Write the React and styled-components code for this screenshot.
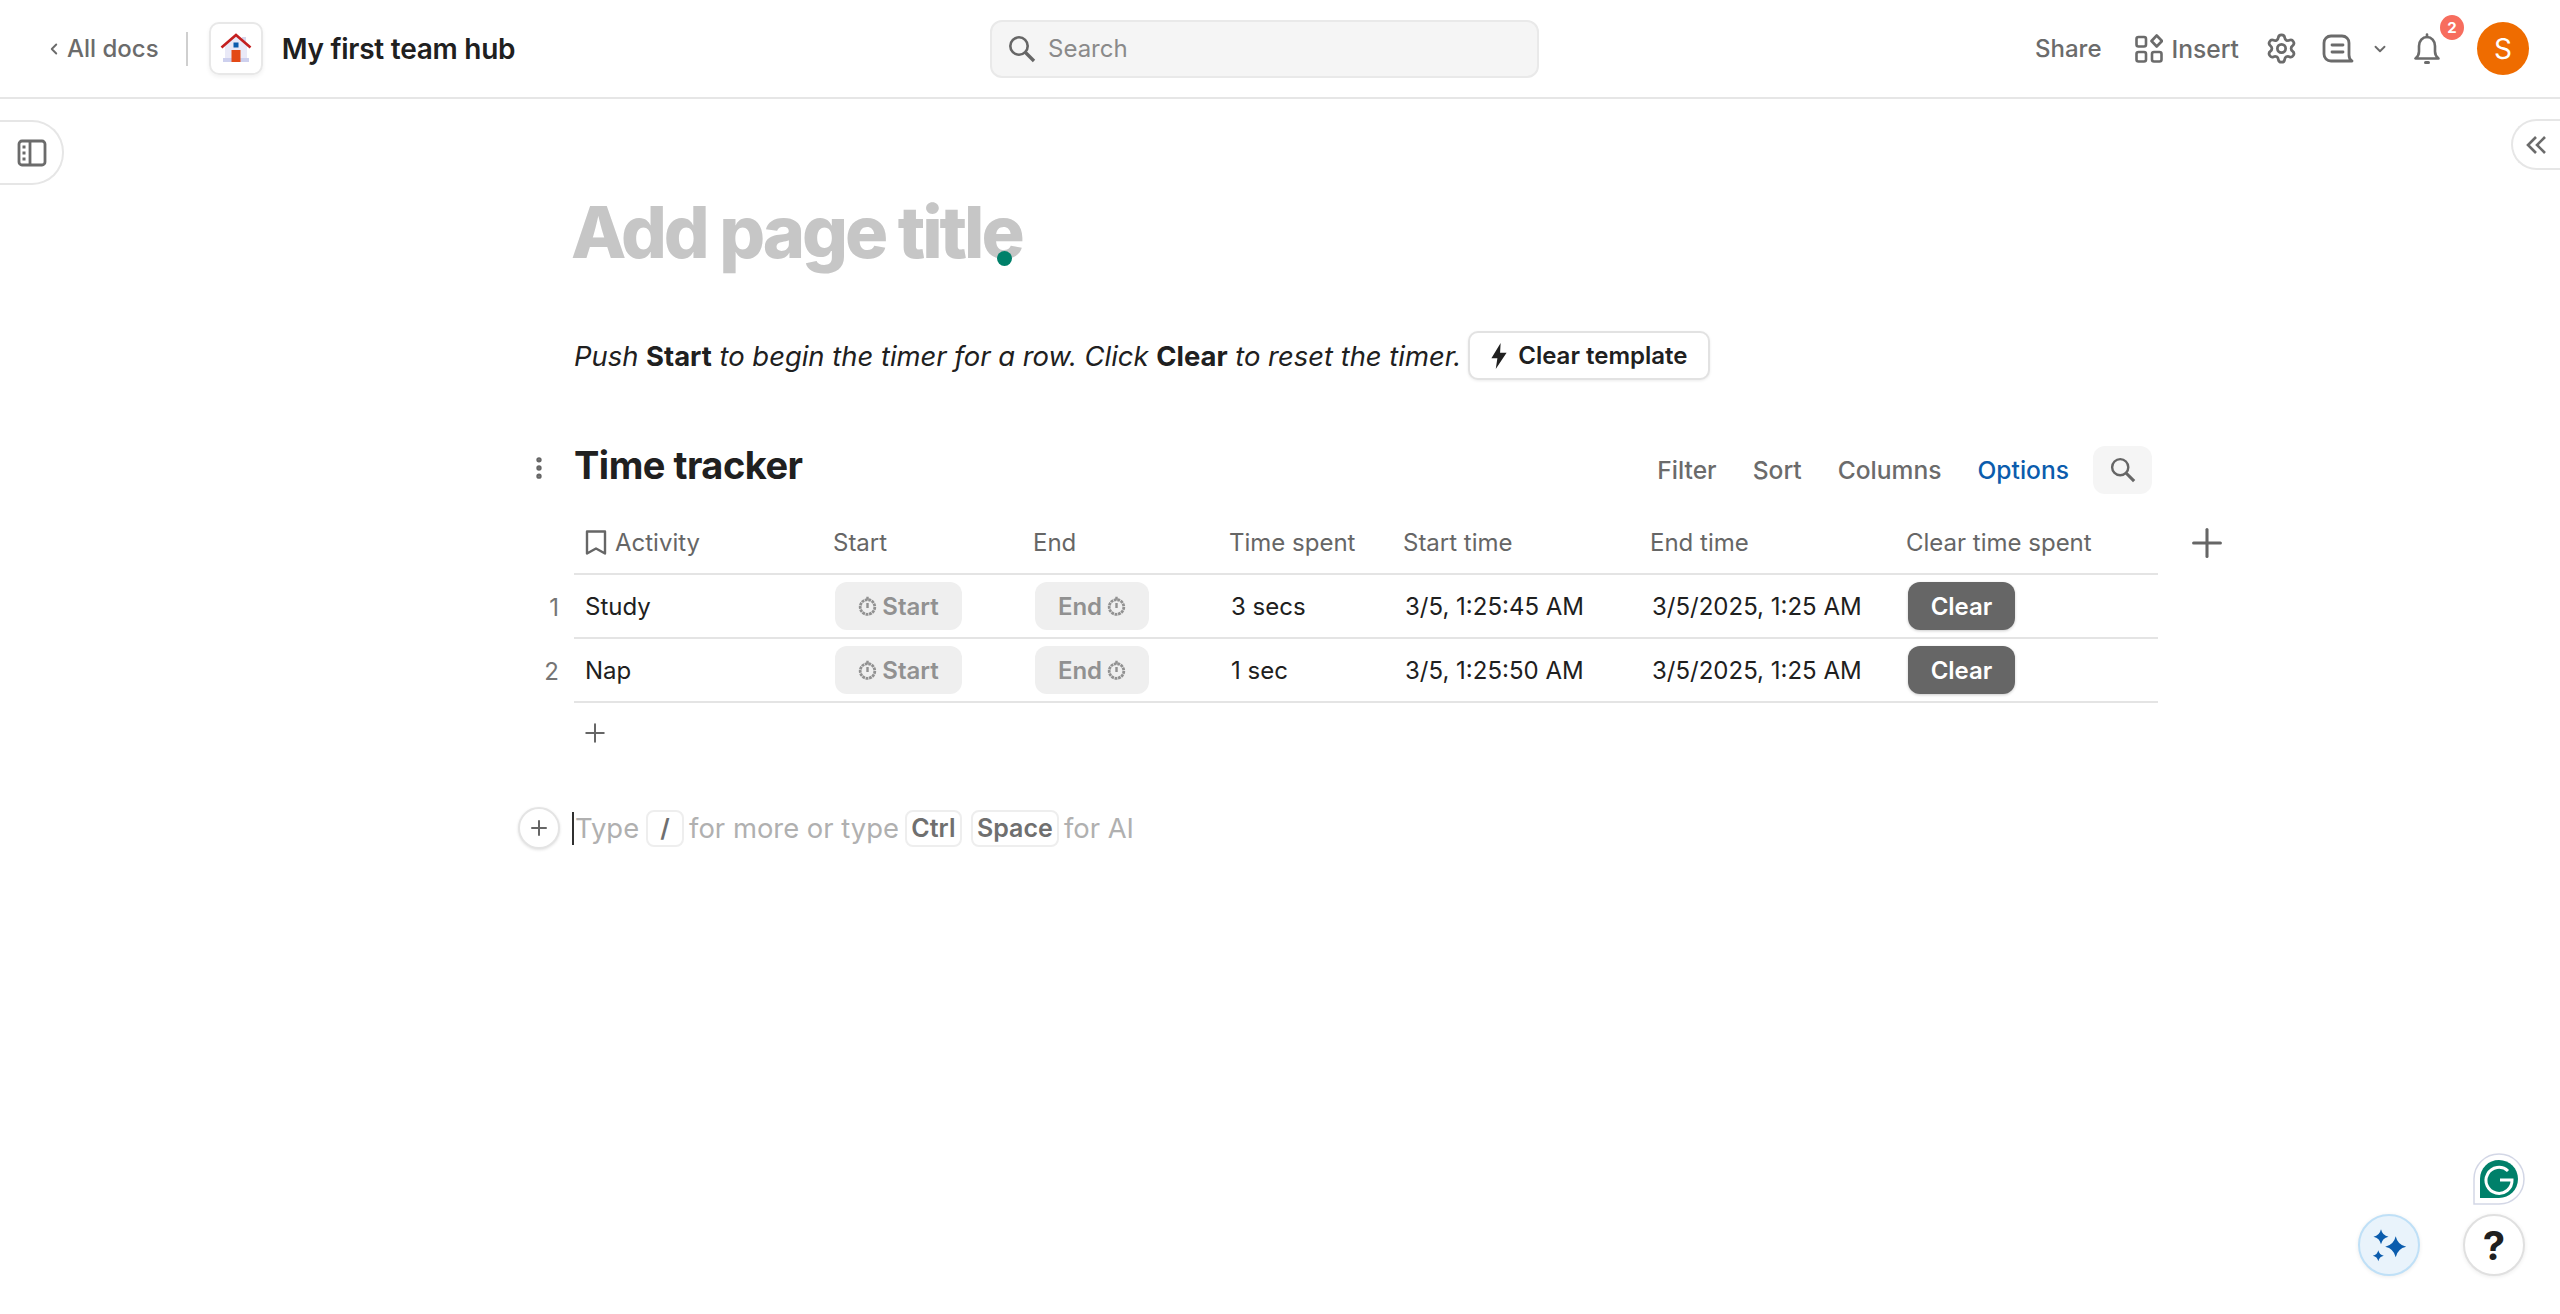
import React from "react";
import styled, { createGlobalStyle } from "styled-components";
import { ChevronDown, ChevronLeft, EllipsisVertical, Plus, Settings } from "lucide-react";

const GlobalStyle = createGlobalStyle`
  html, body { margin: 0; padding: 0; background: #fff; }
  body { font-family: Inter, "Liberation Sans", sans-serif; color: #202020; overflow: hidden; }
  * { box-sizing: border-box; }
`;

const Page = styled.div`
  position: relative;
  width: 2560px;
  height: 1314px;
  overflow: hidden;
`;

const Header = styled.header`
  display: flex;
  align-items: center;
  height: 99px;
  padding: 0 31px 0 45px;
  border-bottom: 2px solid #e6e6e6;
`;

const HeaderLeft = styled.div`
  display: flex;
  align-items: center;
  width: 945px;
`;

const BackLink = styled.a`
  display: flex;
  align-items: center;
  gap: 4px;
  font-size: 24px;
  font-weight: 500;
  color: #6b6b6b;
`;

const VDivider = styled.div`
  width: 2px;
  height: 34px;
  background: #cfcfcf;
  margin: 0 21px 0 27px;
`;

const DocIcon = styled.div`
  display: flex;
  align-items: center;
  justify-content: center;
  width: 54px;
  height: 53px;
  border: 2px solid #e8e8e8;
  border-radius: 10px;
  box-shadow: 0 2px 4px rgba(0, 0, 0, 0.06);
`;

const DocTitle = styled.h1`
  margin: 0 0 0 19px;
  font-size: 28px;
  font-weight: 600;
  letter-spacing: -0.25px;
  color: #202020;
`;

const SearchBox = styled.div`
  display: flex;
  align-items: center;
  gap: 12px;
  width: 549px;
  height: 58px;
  padding: 0 16px;
  background: #f5f5f5;
  border: 2px solid #e9e9e9;
  border-radius: 12px;
  font-size: 24px;
  color: #8a8a8a;
  svg { color: #666; }
`;

const HeaderRight = styled.div`
  display: flex;
  align-items: center;
  margin-left: auto;
  color: #6b6b6b;
`;

const HeaderText = styled.span`
  font-size: ${(p) => p.$size || 24}px;
  font-weight: 500;
  margin-left: ${(p) => p.$ml || 0}px;
`;

const IconSlot = styled.span`
  position: relative;
  display: flex;
  margin-left: ${(p) => p.$ml || 0}px;
`;

const Badge = styled.span`
  position: absolute;
  top: -18px;
  left: 26px;
  width: 24px;
  height: 25px;
  border-radius: 50%;
  background: #f76d5e;
  color: #fff;
  font-size: 15px;
  font-weight: 700;
  display: flex;
  align-items: center;
  justify-content: center;
`;

const Avatar = styled.div`
  width: 52px;
  height: 53px;
  margin-left: 37px;
  border-radius: 50%;
  background: #ef6c00;
  color: #fff;
  font-size: 28px;
  display: flex;
  align-items: center;
  justify-content: center;
`;

const SideTab = styled.button`
  position: absolute;
  top: ${(p) => p.$top}px;
  ${(p) => (p.$right ? "right: 0;" : "left: 0;")}
  width: ${(p) => p.$w}px;
  height: ${(p) => p.$h}px;
  padding: ${(p) => (p.$right ? "0 0 0 13px" : "0 0 0 17px")};
  display: flex;
  align-items: center;
  justify-content: flex-start;
  background: #fff;
  color: #6b6b6b;
  border: 2px solid #e6e6e6;
  ${(p) => (p.$right ? "border-right: none;" : "border-left: none;")}
  border-radius: ${(p) => (p.$right ? "26px 0 0 26px" : "0 32px 32px 0")};
`;

const Content = styled.main`
  margin-left: 520px;
  width: 1720px;
`;

const TitleRow = styled.div`
  position: relative;
  margin: 89px 0 0 54px;
  height: 90px;
`;

const PageTitle = styled.div`
  font-size: 72px;
  line-height: 88px;
  font-weight: 800;
  letter-spacing: -3.1px;
  color: #c6c6c6;
  margin-left: -3px;
`;

const PresenceDot = styled.span`
  position: absolute;
  left: 423px;
  top: 63px;
  width: 15px;
  height: 15px;
  border-radius: 50%;
  background: #00806a;
`;

const Intro = styled.div`
  display: flex;
  align-items: center;
  height: 49px;
  margin: 53px 0 0 54px;
  font-size: 27.4px;
  font-style: italic;
  strong { font-style: normal; font-weight: 700; }
  white-space: pre;
`;

const TemplateButton = styled.button`
  display: flex;
  align-items: center;
  gap: 9px;
  height: 49px;
  width: 242px;
  margin-left: 7px;
  padding: 0 19px;
  background: #fff;
  border: 2px solid #e2e2e2;
  border-radius: 10px;
  box-shadow: 0 1px 3px rgba(0, 0, 0, 0.08);
  font: 600 24px Inter, sans-serif;
  color: #202020;
`;

const TableBar = styled.div`
  display: flex;
  align-items: center;
  height: 48px;
  margin: 66px 0 0 0;
  width: 1632px;
`;

const Handle = styled.span`
  display: flex;
  justify-content: flex-end;
  width: 33px;
  margin: -5px 21px 0 0;
  color: #666;
`;

const TableTitle = styled.h2`
  margin: -10px 0 0 0;
  font-size: 38px;
  font-weight: 700;
  letter-spacing: -0.5px;
  flex: 1;
`;

const ToolLink = styled.span`
  font-size: 24.6px;
  font-weight: 500;
  color: ${(p) => (p.$active ? "#0b5cad" : "#6b6b6b")};
  margin-left: ${(p) => p.$ml}px;
`;

const ToolSearch = styled.span`
  display: flex;
  align-items: center;
  justify-content: center;
  width: 59px;
  height: 48px;
  margin-left: 24px;
  background: #f5f5f5;
  border-radius: 12px;
  color: #666;
`;

const Row = styled.div`
  display: grid;
  grid-template-columns: 54px 250px 200px 196px 174px 247px 256px 261px 60px;
  height: 64px;
  align-items: stretch;
  font-size: 24px;
`;

const HeadRow = styled(Row)`
  margin-top: 17px;
  color: #666;
`;

const RowNum = styled.span`
  display: flex;
  align-items: center;
  justify-content: flex-end;
  padding-right: 15px;
  color: #757575;
`;

const Cell = styled.div`
  display: flex;
  align-items: center;
  gap: 8px;
  padding-left: ${(p) => (p.$head ? 9 : 11)}px;
  border-bottom: 2px solid #e4e4e4;
  white-space: nowrap;
  color: ${(p) => (p.$head ? "#666" : "#202020")};
  svg { flex: none; }
`;

const AddColumn = styled.span`
  display: flex;
  align-items: center;
  padding-left: 26px;
  color: #666;
  svg { flex: none; }
`;

const TimerButton = styled.span`
  display: flex;
  align-items: center;
  justify-content: center;
  gap: 5px;
  width: ${(p) => p.$w}px;
  height: 48px;
  background: #efefef;
  border-radius: 12px;
  color: #919191;
  font-weight: 600;
`;

const ClearButton = styled.span`
  display: flex;
  align-items: center;
  justify-content: center;
  width: 107px;
  height: 48px;
  background: #666;
  border-radius: 12px;
  color: #fff;
  font-weight: 600;
  box-shadow: 0 1px 3px rgba(0, 0, 0, 0.2);
`;

const AddRow = styled.div`
  display: flex;
  align-items: center;
  height: 60px;
  padding-left: 60px;
  color: #666;
`;

const Prompt = styled.div`
  display: flex;
  align-items: center;
  height: 44px;
  margin-top: 43px;
  font-size: 27.4px;
  color: #b0b0b0;
  white-space: pre;
`;

const PromptAdd = styled.span`
  display: flex;
  align-items: center;
  justify-content: center;
  width: 42px;
  height: 42px;
  margin: 0 12px 0 -2px;
  border: 2px solid #e4e4e4;
  border-radius: 50%;
  background: #fff;
  color: #666;
  box-shadow: 0 1px 3px rgba(0, 0, 0, 0.12);
`;

const Caret = styled.span`
  width: 2px;
  height: 33px;
  margin-right: 1px;
  background: #303030;
`;

const Key = styled.kbd`
  display: flex;
  align-items: center;
  justify-content: center;
  width: ${(p) => p.$w}px;
  height: 37px;
  margin: 0 ${(p) => p.$mr}px 0 ${(p) => p.$ml}px;
  border: 2px solid #eeeeee;
  border-radius: 8px;
  font: 600 25px Inter, sans-serif;
  color: #6f6f6f;
`;

const Grammarly = styled.div`
  position: absolute;
  left: 2473px;
  top: 1153px;
`;

const RoundFab = styled.button`
  position: absolute;
  left: ${(p) => p.$left}px;
  top: 1214px;
  width: 62px;
  height: 62px;
  display: flex;
  align-items: center;
  justify-content: center;
  border-radius: 50%;
  background: ${(p) => (p.$ai ? "#e9f3fb" : "#fff")};
  border: 2px solid ${(p) => (p.$ai ? "#bfe0f7" : "#e0e0e0")};
  box-shadow: 0 1px 4px rgba(0, 0, 0, 0.08);
  font: 700 40px Inter, sans-serif;
  color: #202020;
`;

const BookmarkSvg = styled.svg`
  margin-left: 2px;
`;

const HouseIcon = () => (
  <svg width="32" height="32" viewBox="0 0 32 32">
    <rect x="22" y="4" width="4" height="9" fill="#d5d8ee" />
    <path d="M5 13 16 3l11 10v14H5z" fill="#e9e9f7" />
    <rect x="3" y="25" width="26" height="4" fill="#cdd0ee" />
    <path d="M1.500 14.500 16 2l14.500 12.500" fill="none" stroke="#c41f1f" strokeWidth="2.600" />
    <rect x="13.500" y="9.500" width="5" height="5" fill="#0b5cad" />
    <rect x="11.500" y="17" width="9" height="12" fill="#e34a16" />
  </svg>
);

const SidebarIcon = () => (
  <svg width="30" height="28" viewBox="0 0 30 28" fill="none" stroke="currentColor" strokeWidth="2.800">
    <rect x="2" y="2" width="26" height="24" rx="3" />
    <path d="M13 2v24" />
    <path d="M5.500 8h3M5.500 14h3M5.500 20h3" strokeWidth="3" />
  </svg>
);

const InsertIcon = () => (
  <svg width="28" height="30" viewBox="0 0 28 30" fill="none" stroke="currentColor" strokeWidth="2.600">
    <rect x="1.500" y="3" width="9.500" height="9.500" rx="2" />
    <rect x="1.500" y="18" width="9.500" height="9.500" rx="2" />
    <rect x="17" y="18" width="9.500" height="9.500" rx="2" />
    <path d="M21.700 1.500 27 7l-5.300 5.500L16.500 7z" strokeLinejoin="round" />
  </svg>
);

const CommentIcon = () => (
  <svg width="32" height="32" viewBox="0 0 32 32" fill="none" stroke="currentColor" strokeWidth="2.800" strokeLinecap="round" strokeLinejoin="round">
    <path d="M9 3h11c4 0 7 3 7 7v12c0 3 1 5 3 6H9c-4 0-7-3-7-7V10c0-4 3-7 7-7z" />
    <path d="M10 12h11M10 19h11" />
  </svg>
);

const BellIcon = () => (
  <svg width="26" height="32" viewBox="0 0 26 32" fill="none" stroke="currentColor" strokeWidth="2.600" strokeLinecap="round" strokeLinejoin="round">
    <path d="M13 1.500v2.500" />
    <path d="M1.500 25.500h23c-2.500-2-3.500-4-3.500-7V13c0-5-3.500-9-8-9s-8 4-8 9v5.500c0 3-1 5-3.500 7z" />
    <path d="M11.500 29.500h3" strokeWidth="3" />
  </svg>
);

const SearchIcon = ({ size = 28 }) => (
  <svg width={size} height={size} viewBox="0 0 28 28" fill="none" stroke="currentColor" strokeWidth="2.600">
    <circle cx="11" cy="11" r="8.700" />
    <path d="M17.500 17.500 26 26" strokeWidth="3.400" />
  </svg>
);

const BookmarkIcon = () => (
  <BookmarkSvg width="22" height="27" viewBox="0 0 22 27" fill="none" stroke="currentColor" strokeWidth="2.400" strokeLinejoin="round">
    <path d="M2 2.500h18v22l-9-5-9 5z" />
  </BookmarkSvg>
);

const DoubleChevronIcon = () => (
  <svg width="20" height="18" viewBox="0 0 20 18" fill="none" stroke="currentColor" strokeWidth="2.600">
    <path d="M10 1 2 9l8 8M19 1l-8 8 8 8" />
  </svg>
);

const BoltIcon = () => (
  <svg width="20" height="26" viewBox="0 0 18 24" fill="currentColor">
    <path d="M10.500 0 2 14h5.500L6 24l10-15h-6z" />
  </svg>
);

const StopwatchIcon = () => (
  <svg width="19" height="20" viewBox="0 0 19 20" fill="none" stroke="currentColor" strokeWidth="2.800">
    <circle cx="9.500" cy="11" r="7.300" strokeDasharray="2.800 0.700" />
    <path d="M9.500 0.800v3M9.500 7v5" strokeWidth="2.400" />
  </svg>
);

// four pointed star, used three times in the AI button
const star = (cx, cy, r) => {
  const c = r * 0.18;
  return `M${cx} ${cy - r}Q${cx + c} ${cy - c} ${cx + r} ${cy}Q${cx + c} ${cy + c} ${cx} ${cy + r}Q${cx - c} ${cy + c} ${cx - r} ${cy}Q${cx - c} ${cy - c} ${cx} ${cy - r}z`;
};

const SparkleIcon = () => (
  <svg width="36" height="36" viewBox="0 0 36 36" fill="#0b5cad">
    <path d={star(10, 9.7, 7.5)} />
    <path d={star(24.7, 19.7, 10.5)} />
    <path d={star(7.3, 28.7, 5.5)} />
  </svg>
);

const GrammarlyIcon = () => (
  <svg width="52" height="52" viewBox="0 0 52 52">
    <path d="M1 51V26C1 12 12 1 26 1s25 11 25 25-11 25-25 25z" fill="#fff" stroke="#d3d7e6" strokeWidth="1.500" />
    <path d="M7 45V26C7 15 15.500 7 26 7s19 8.500 19 19-8.500 19-19 19z" fill="#00806a" />
    <path d="M35 18a13 13 0 1 0 4 9H27" fill="none" stroke="#fff" strokeWidth="3" />
  </svg>
);

const rows = [
  { id: 1, name: "Study", spent: "3 secs", start: "3/5, 1:25:45 AM", end: "3/5/2025, 1:25 AM" },
  { id: 2, name: "Nap", spent: "1 sec", start: "3/5, 1:25:50 AM", end: "3/5/2025, 1:25 AM" },
];

export default function App() {
  return (
    <Page>
      <GlobalStyle />
      <Header>
        <HeaderLeft>
          <BackLink>
            <ChevronLeft size={18} strokeWidth={2.500} />
            All docs
          </BackLink>
          <VDivider />
          <DocIcon>
            <HouseIcon />
          </DocIcon>
          <DocTitle>My first team hub</DocTitle>
        </HeaderLeft>
        <SearchBox>
          <SearchIcon />
          Search
        </SearchBox>
        <HeaderRight>
          <HeaderText>Share</HeaderText>
          <IconSlot $ml={33}>
            <InsertIcon />
          </IconSlot>
          <HeaderText $ml={9} $size={24.6}>Insert</HeaderText>
          <IconSlot $ml={26}>
            <Settings size={33} strokeWidth={2} />
          </IconSlot>
          <IconSlot $ml={24}>
            <CommentIcon />
          </IconSlot>
          <IconSlot $ml={17}>
            <ChevronDown size={18} strokeWidth={2.500} />
          </IconSlot>
          <IconSlot $ml={25}>
            <BellIcon />
            <Badge>2</Badge>
          </IconSlot>
          <Avatar>S</Avatar>
        </HeaderRight>
      </Header>

      <SideTab $top={120} $w={64} $h={65}>
        <SidebarIcon />
      </SideTab>
      <SideTab $right $top={119} $w={49} $h={51}>
        <DoubleChevronIcon />
      </SideTab>

      <Content>
        <TitleRow>
          <PageTitle>Add page title</PageTitle>
          <PresenceDot />
        </TitleRow>

        <Intro>
          Push <strong>Start</strong> to begin the timer for a row. Click <strong>Clear</strong> to reset the timer.
          <TemplateButton>
            <BoltIcon />
            Clear template
          </TemplateButton>
        </Intro>

        <TableBar>
          <Handle>
            <EllipsisVertical size={28} strokeWidth={2.600} />
          </Handle>
          <TableTitle>Time tracker</TableTitle>
          <ToolLink $ml={0}>Filter</ToolLink>
          <ToolLink $ml={36}>Sort</ToolLink>
          <ToolLink $ml={36}>Columns</ToolLink>
          <ToolLink $ml={36} $active>
            Options
          </ToolLink>
          <ToolSearch>
            <SearchIcon size={26} />
          </ToolSearch>
        </TableBar>

        <HeadRow>
          <span />
          <Cell $head>
            <BookmarkIcon />
            Activity
          </Cell>
          <Cell $head>Start</Cell>
          <Cell $head>End</Cell>
          <Cell $head>Time spent</Cell>
          <Cell $head>Start time</Cell>
          <Cell $head>End time</Cell>
          <Cell $head>Clear time spent</Cell>
          <AddColumn>
            <Plus size={46} strokeWidth={1.600} />
          </AddColumn>
        </HeadRow>

        {rows.map((row) => (
          <Row key={row.id}>
            <RowNum>{row.id}</RowNum>
            <Cell>{row.name}</Cell>
            <Cell>
              <TimerButton $w={127}>
                <StopwatchIcon />
                Start
              </TimerButton>
            </Cell>
            <Cell>
              <TimerButton $w={114}>
                End
                <StopwatchIcon />
              </TimerButton>
            </Cell>
            <Cell>{row.spent}</Cell>
            <Cell>{row.start}</Cell>
            <Cell>{row.end}</Cell>
            <Cell>
              <ClearButton>Clear</ClearButton>
            </Cell>
          </Row>
        ))}

        <AddRow>
          <Plus size={30} strokeWidth={1.600} />
        </AddRow>

        <Prompt>
          <PromptAdd>
            <Plus size={24} strokeWidth={2} />
          </PromptAdd>
          <Caret />
          Type
          <Key $w={38} $ml={7} $mr={5}>/</Key>
          for more or type
          <Key $w={57} $ml={6} $mr={9}>Ctrl</Key>
          <Key $w={88} $ml={0} $mr={5}>Space</Key>
          for AI
        </Prompt>
      </Content>

      <Grammarly>
        <GrammarlyIcon />
      </Grammarly>
      <RoundFab $ai $left={2358}>
        <SparkleIcon />
      </RoundFab>
      <RoundFab $left={2463}>?</RoundFab>
    </Page>
  );
}
